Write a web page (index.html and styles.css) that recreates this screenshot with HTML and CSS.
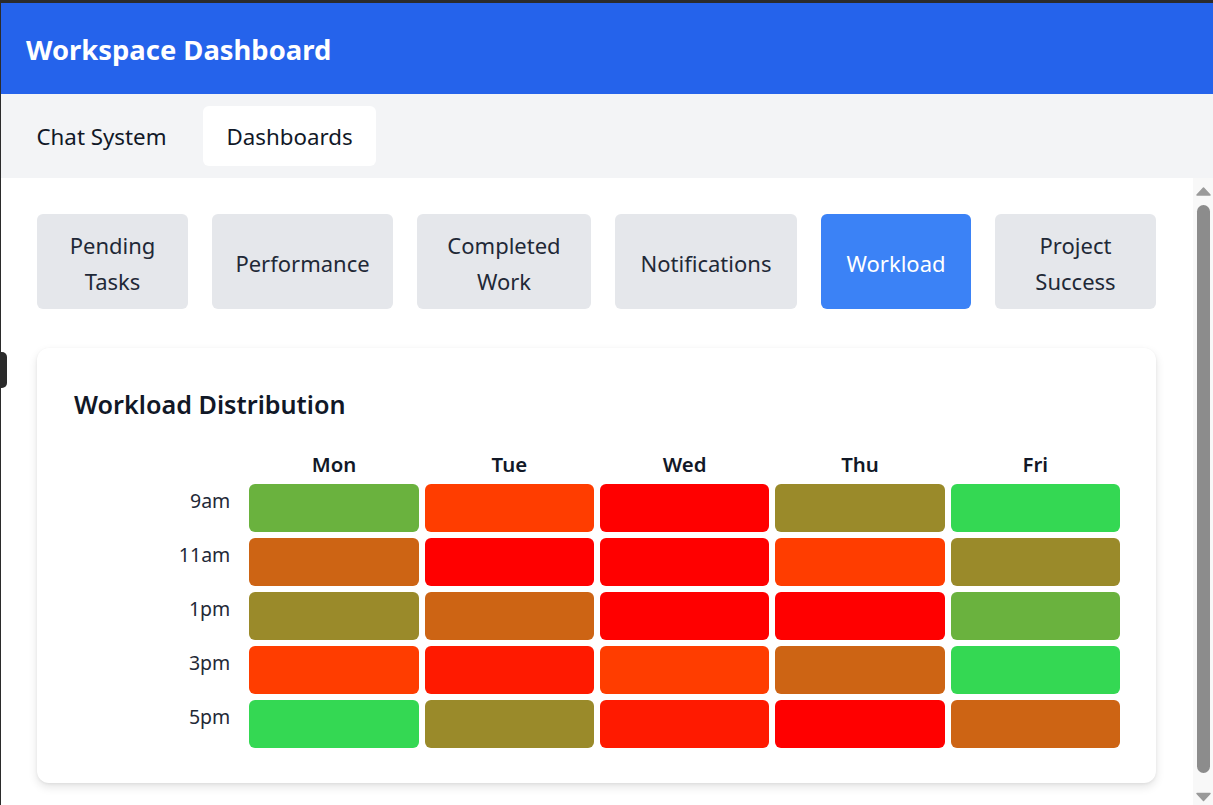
FILE: index.html
```html
<!DOCTYPE html>
<html lang="en">
<head>
<meta charset="utf-8">
<title>Workspace Dashboard</title>
<link rel="stylesheet" href="styles.css">
</head>
<body>
<div class="app">
  <header class="topbar"><h1 class="title">Workspace Dashboard</h1></header>
  <nav class="tabs">
    <button class="tab">Chat System</button>
    <button class="tab active">Dashboards</button>
  </nav>
  <div class="main">
    <div class="content">
      <div class="subtabs">
        <button class="subtab">Pending Tasks</button>
        <button class="subtab">Performance</button>
        <button class="subtab">Completed Work</button>
        <button class="subtab">Notifications</button>
        <button class="subtab active">Workload</button>
        <button class="subtab">Project Success</button>
      </div>
      <section class="card">
        <h2 class="card-title">Workload Distribution</h2>
        <div class="heatmap">
          <div class="corner"></div>
          <div class="day">Mon</div><div class="day">Tue</div><div class="day">Wed</div><div class="day">Thu</div><div class="day">Fri</div>

          <div class="time">9am</div>
          <div class="cell l1"></div><div class="cell l4"></div><div class="cell l6"></div><div class="cell l2"></div><div class="cell l0"></div>

          <div class="time">11am</div>
          <div class="cell l3"></div><div class="cell l6"></div><div class="cell l6"></div><div class="cell l4"></div><div class="cell l2"></div>

          <div class="time">1pm</div>
          <div class="cell l2"></div><div class="cell l3"></div><div class="cell l6"></div><div class="cell l6"></div><div class="cell l1"></div>

          <div class="time">3pm</div>
          <div class="cell l4"></div><div class="cell l5"></div><div class="cell l4"></div><div class="cell l3"></div><div class="cell l0"></div>

          <div class="time">5pm</div>
          <div class="cell l0"></div><div class="cell l2"></div><div class="cell l5"></div><div class="cell l6"></div><div class="cell l3"></div>
        </div>
      </section>
    </div>
    <div class="scrollbar">
      <svg class="arrow-up" width="20" height="22" viewBox="0 0 20 22"><path d="M4 17 L10.5 10 L17 17 Z" fill="#9a9a9a" stroke="#9a9a9a" stroke-width="1.5" stroke-linejoin="round"/></svg>
      <div class="track"><div class="thumb"></div></div>
      <svg class="arrow-down" width="20" height="27" viewBox="0 0 20 27"><path d="M4 15.5 L17 15.5 L10.5 22.5 Z" fill="#9a9a9a" stroke="#9a9a9a" stroke-width="1.5" stroke-linejoin="round"/></svg>
    </div>
  </div>
</div>
<div class="edge-tab"></div>
</body>
</html>
```

FILE: styles.css
```css
* { box-sizing: border-box; }

html, body {
  margin: 0;
  height: 100%;
}

body {
  border-top: 3px solid #2b2b2b;
  border-left: 1px solid #2b2b2b;
  overflow: hidden;
  font-family: "Noto Sans", "Open Sans", sans-serif;
  color: #111827;
  background: #ffffff;
}

.app {
  height: 100%;
  display: flex;
  flex-direction: column;
}

.topbar {
  background: #2563eb;
  height: 91px;
  padding: 0 25px;
  display: flex;
  align-items: center;
  flex: none;
}

.title {
  margin: 0;
  color: #ffffff;
  font-size: 27.4px;
  font-weight: 700;
  line-height: 36px;
  padding-top: 2px;
}

.tabs {
  background: #f3f4f6;
  height: 84px;
  padding: 12px 12px;
  display: flex;
  gap: 13px;
  flex: none;
}

.tab {
  border: none;
  background: transparent;
  font-family: inherit;
  font-size: 22.3px;
  line-height: 35px;
  color: #111827;
  padding: 13px 23.5px 12px;
  border-radius: 6px;
}

.tab.active {
  background: #ffffff;
}

.main {
  flex: 1;
  min-height: 0;
  display: flex;
}

.content {
  flex: 1;
  min-width: 0;
  overflow: hidden;
  padding: 36px 37px 36px 36px;
}

.subtabs {
  display: grid;
  grid-template-columns: 151px 181px 174px 182px 150px 161px;
  gap: 24px;
  margin-bottom: 39px;
}

.subtab {
  height: 95px;
  border: none;
  border-radius: 6px;
  background: #e5e7eb;
  color: #1f2937;
  font-family: inherit;
  font-size: 22px;
  line-height: 36px;
  padding: 2px 18px 0;
  text-align: center;
}

.subtab.active {
  background: #3b82f6;
  color: #ffffff;
}

.card {
  background: #ffffff;
  border-radius: 12px;
  box-shadow: 0 4px 10px rgba(0, 0, 0, 0.11), 0 1px 3px rgba(0, 0, 0, 0.06);
  padding: 39px 36px 35px 37px;
}

.card-title {
  margin: 0 0 29px;
  font-size: 25.2px;
  font-weight: 600;
  line-height: 34px;
  color: #111827;
}

.heatmap {
  display: grid;
  grid-template-columns: repeat(6, 1fr);
  grid-auto-rows: 48px;
  grid-template-rows: 28px;
  gap: 6px;
}

.day {
  text-align: center;
  font-size: 20.4px;
  font-weight: 600;
  line-height: 28px;
  color: #111827;
}

.time {
  text-align: right;
  padding-right: 13px;
  font-size: 19.5px;
  line-height: 32px;
  padding-top: 1px;
  color: #1f2937;
}

.cell {
  border-radius: 6px;
}

.l0 { background: #34d853; }
.l1 { background: #6ab23e; }
.l2 { background: #9a8a2a; }
.l3 { background: #cd6414; }
.l4 { background: #ff3d00; }
.l5 { background: #ff1a00; }
.l6 { background: #ff0000; }

.scrollbar {
  width: 20px;
  flex: none;
  background: #f8f8f8;
  display: flex;
  flex-direction: column;
}

.arrow-up,
.arrow-down {
  display: block;
  flex: none;
}

.track {
  flex: 1;
  padding: 5px 3px 5px 4px;
  display: flex;
}

.thumb {
  flex: 1;
  background: #8c8c8c;
  border-radius: 7px;
}

.edge-tab {
  position: absolute;
  left: 0;
  top: 352px;
  width: 7px;
  height: 36px;
  background: #2b2b2b;
  border-radius: 0 5px 5px 0;
}
```
